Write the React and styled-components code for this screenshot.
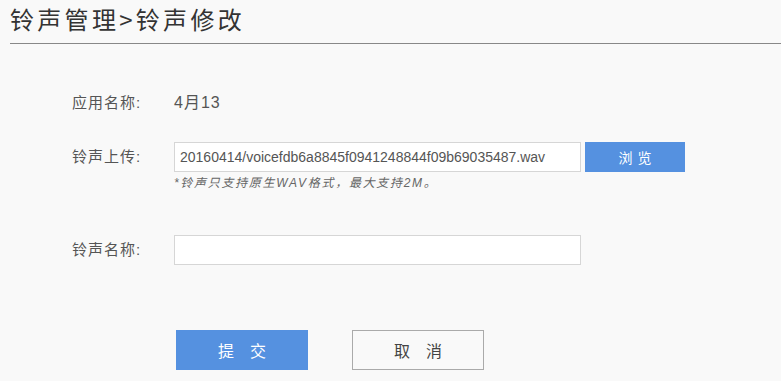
import React from "react";
import styled, { createGlobalStyle } from "styled-components";

const GlobalStyle = createGlobalStyle`
  html, body {
    margin: 0;
    padding: 0;
    background: #f9f9f9;
  }
  body {
    font-family: "Liberation Sans", "Noto Sans CJK SC", sans-serif;
  }
`;

const Page = styled.div`
  width: 781px;
  height: 381px;
  overflow: hidden;
  background: #f9f9f9;
`;

const Header = styled.div`
  margin-left: 10px;
  padding-bottom: 5px;
  border-bottom: 1px solid #888;
`;

const Title = styled.h1`
  margin: 0;
  font-size: 24px;
  font-weight: normal;
  line-height: 38px;
  letter-spacing: 3.3px;
  color: #333;
  font-family: "Noto Sans CJK SC", sans-serif;
`;

const Form = styled.div`
  display: flex;
  flex-direction: column;
  padding: 44px 0 0 72px;
`;

const Row = styled.div`
  display: flex;
  align-items: flex-start;
  margin-top: ${props => props.$top || 0}px;
`;

const Label = styled.span`
  width: 102px;
  flex-shrink: 0;
  font-size: 15px;
  line-height: 30px;
  letter-spacing: 1px;
  color: #555;
`;

const Value = styled.span`
  font-size: 16px;
  line-height: 30px;
  letter-spacing: 1px;
  color: #555;
`;

const Field = styled.div`
  display: flex;
  flex-direction: column;
`;

const Line = styled.div`
  display: flex;
  gap: 4px;
`;

const TextInput = styled.input`
  box-sizing: border-box;
  width: 407px;
  height: 30px;
  margin: 0;
  padding: 0 5px;
  border: 1px solid #d6d6d6;
  background: #fff;
  font-family: "Liberation Sans", "Noto Sans CJK SC", sans-serif;
  font-size: 14px;
  color: #555;
  outline: none;
`;

const Hint = styled.span`
  margin-top: 2px;
  font-size: 12px;
  line-height: 18px;
  font-style: italic;
  letter-spacing: 1.7px;
  color: #666;
`;

const BrowseButton = styled.button`
  width: 100px;
  height: 30px;
  border: none;
  padding: 0 0 0 5px;
  background: #5591e0;
  color: #fff;
  font-family: "Noto Sans CJK SC", sans-serif;
  font-size: 14px;
  letter-spacing: 5px;
`;

const Actions = styled.div`
  display: flex;
  gap: 44px;
  margin: 65px 0 0 176px;
`;

const ActionButton = styled.button`
  box-sizing: border-box;
  width: 132px;
  height: 40px;
  padding: 0;
  font-family: "Noto Sans CJK SC", sans-serif;
  font-size: 16px;
  border: 1px solid ${props => (props.$primary ? "#5591e0" : "#aaa")};
  background: ${props => (props.$primary ? "#5591e0" : "#f9f9f9")};
  color: ${props => (props.$primary ? "#fff" : "#444")};
`;

const App = () => (
  <Page>
    <GlobalStyle />
    <Header>
      <Title>铃声管理&gt;铃声修改</Title>
    </Header>
    <Form>
      <Row>
        <Label>应用名称:</Label>
        <Value>4月13</Value>
      </Row>
      <Row $top={24}>
        <Label>铃声上传:</Label>
        <Field>
          <Line>
            <TextInput
              readOnly
              value="20160414/voicefdb6a8845f0941248844f09b69035487.wav"
            />
            <BrowseButton>浏览</BrowseButton>
          </Line>
          <Hint>*铃声只支持原生WAV格式，最大支持2M。</Hint>
        </Field>
      </Row>
      <Row $top={43}>
        <Label>铃声名称:</Label>
        <TextInput />
      </Row>
    </Form>
    <Actions>
      <ActionButton $primary>提　交</ActionButton>
      <ActionButton>取　消</ActionButton>
    </Actions>
  </Page>
);

export default App;
